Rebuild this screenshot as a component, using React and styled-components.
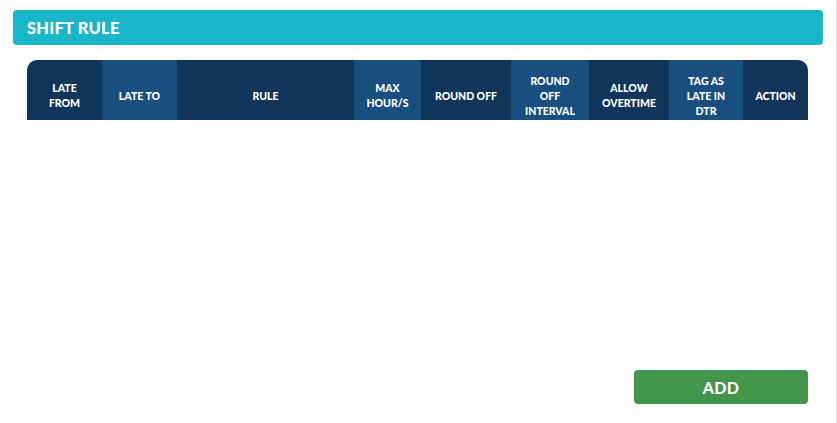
import React from "react";
import styled, { createGlobalStyle } from "styled-components";

const GlobalStyle = createGlobalStyle`
  html, body {
    margin: 0;
    padding: 0;
    background: #fff;
    font-family: "Lato", "Noto Sans", sans-serif;
  }
`;

const Page = styled.div`
  width: 837px;
  height: 423px;
  border-right: 1px solid #e2e2e2;
  display: flex;
  flex-direction: column;
  padding-top: 10px;
  box-sizing: border-box;
`;

const TitleBar = styled.div`
  margin: 0 13px;
  height: 35px;
  background-color: #19b5c8;
  border-radius: 4px;
  display: flex;
  align-items: center;
  padding-left: 14px;
`;

const Title = styled.h2`
  margin: 0;
  color: #fff;
  font-size: 16.5px;
  font-weight: 900;
  letter-spacing: 0.2px;
`;

const Table = styled.div`
  margin: 15px 28px 0 27px;
  display: grid;
  grid-template-columns: 75px 75px 177px 67px 90px 78px 80px 74px 65px;
  height: 60px;
  border-radius: 10px 10px 0 0;
  overflow: hidden;
`;

const HeadCell = styled.div`
  background-color: ${(p) => (p.light ? "#184f7e" : "#10355a")};
  color: #fff;
  font-size: 10.5px;
  font-weight: 900;
  line-height: 15px;
  text-align: center;
  display: flex;
  align-items: center;
  justify-content: center;
  padding: 12px 2px 0;
  box-sizing: border-box;
  letter-spacing: 0;
`;

const Spacer = styled.div`
  flex: 1;
`;

const Footer = styled.div`
  display: flex;
  justify-content: flex-end;
  margin: 0 28px 19px 0;
`;

const AddButton = styled.button`
  width: 174px;
  height: 34px;
  border: none;
  border-radius: 4px;
  background-color: #43954a;
  color: #fff;
  font-family: "Lato", "Noto Sans", sans-serif;
  font-size: 16px;
  font-weight: 900;
  letter-spacing: 0.3px;
`;

const columns = [
  { label: ["LATE", "FROM"] },
  { label: ["LATE TO"], light: true },
  { label: ["RULE"] },
  { label: ["MAX", "HOUR/S"], light: true },
  { label: ["ROUND OFF"] },
  { label: ["ROUND", "OFF", "INTERVAL"], light: true },
  { label: ["ALLOW", "OVERTIME"] },
  { label: ["TAG AS", "LATE IN", "DTR"], light: true },
  { label: ["ACTION"] },
];

export default function App() {
  return (
    <>
      <GlobalStyle />
      <Page>
        <TitleBar>
          <Title>SHIFT RULE</Title>
        </TitleBar>
        <Table>
          {columns.map((col, i) => (
            <HeadCell key={i} light={col.light}>
              <span>
                {col.label.map((line, j) => (
                  <React.Fragment key={j}>
                    {j > 0 && <br />}
                    {line}
                  </React.Fragment>
                ))}
              </span>
            </HeadCell>
          ))}
        </Table>
        <Spacer />
        <Footer>
          <AddButton>ADD</AddButton>
        </Footer>
      </Page>
    </>
  );
}
